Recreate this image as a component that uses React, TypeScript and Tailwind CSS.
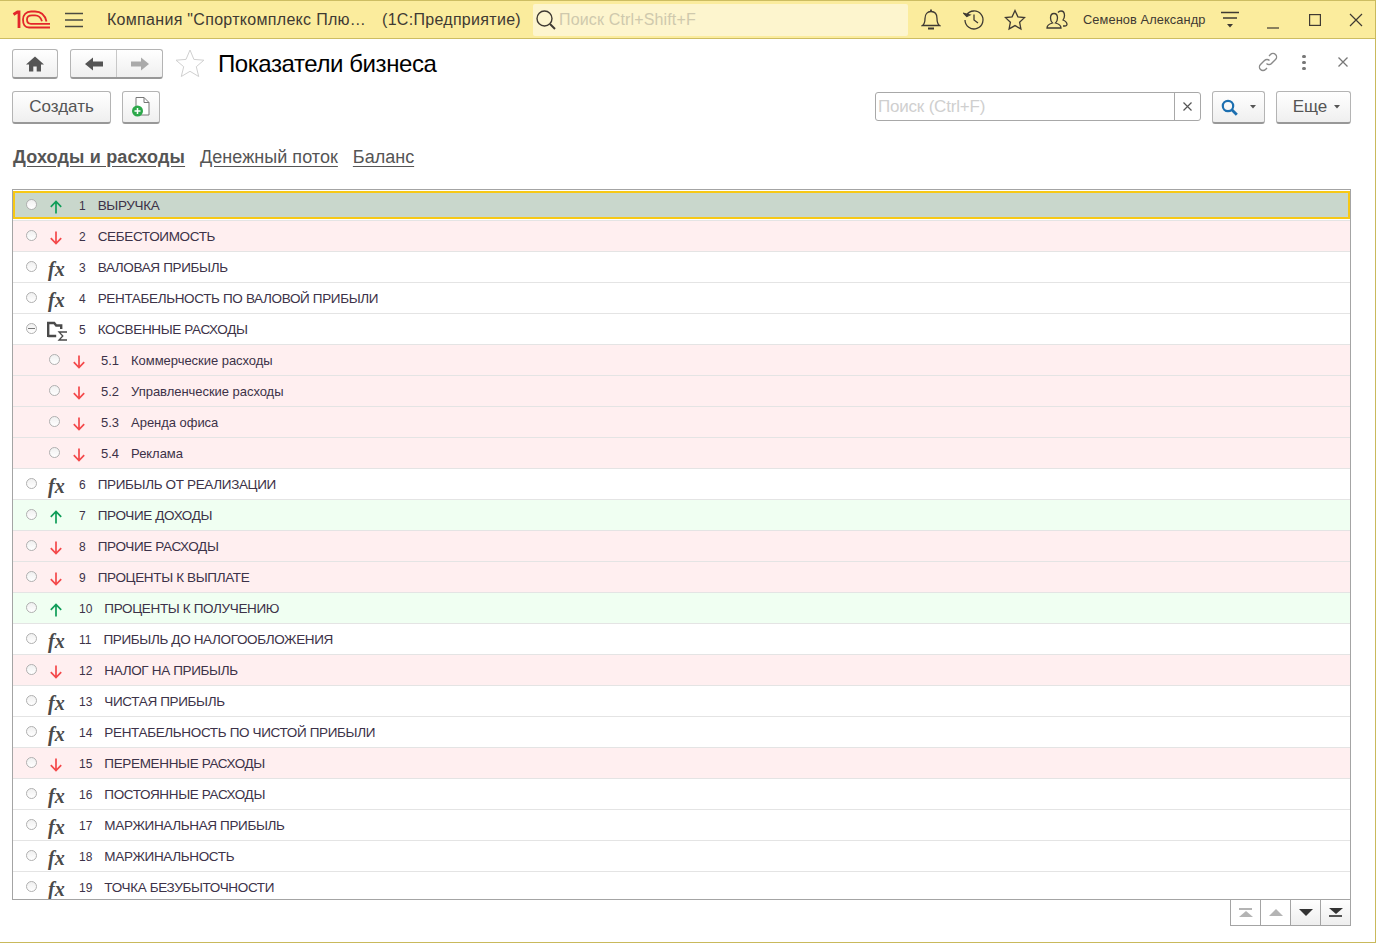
import React from "react";

const btn = "border border-[#b4b4b4] border-b-[#989898] border-b-2 rounded-[3px] bg-gradient-to-b from-white to-[#efefef] flex items-center justify-center";

type Kind = "up" | "down" | "fx" | "group";
type Row = { n: string; t: string; k: Kind; sub?: boolean; sel?: boolean };
const rows: Row[] = [
  { n: "1", t: "ВЫРУЧКА", k: "up", sel: true },
  { n: "2", t: "СЕБЕСТОИМОСТЬ", k: "down" },
  { n: "3", t: "ВАЛОВАЯ ПРИБЫЛЬ", k: "fx" },
  { n: "4", t: "РЕНТАБЕЛЬНОСТЬ ПО ВАЛОВОЙ ПРИБЫЛИ", k: "fx" },
  { n: "5", t: "КОСВЕННЫЕ РАСХОДЫ", k: "group" },
  { n: "5.1", t: "Коммерческие расходы", k: "down", sub: true },
  { n: "5.2", t: "Управленческие расходы", k: "down", sub: true },
  { n: "5.3", t: "Аренда офиса", k: "down", sub: true },
  { n: "5.4", t: "Реклама", k: "down", sub: true },
  { n: "6", t: "ПРИБЫЛЬ ОТ РЕАЛИЗАЦИИ", k: "fx" },
  { n: "7", t: "ПРОЧИЕ ДОХОДЫ", k: "up" },
  { n: "8", t: "ПРОЧИЕ РАСХОДЫ", k: "down" },
  { n: "9", t: "ПРОЦЕНТЫ К ВЫПЛАТЕ", k: "down" },
  { n: "10", t: "ПРОЦЕНТЫ К ПОЛУЧЕНИЮ", k: "up" },
  { n: "11", t: "ПРИБЫЛЬ ДО НАЛОГООБЛОЖЕНИЯ", k: "fx" },
  { n: "12", t: "НАЛОГ НА ПРИБЫЛЬ", k: "down" },
  { n: "13", t: "ЧИСТАЯ ПРИБЫЛЬ", k: "fx" },
  { n: "14", t: "РЕНТАБЕЛЬНОСТЬ ПО ЧИСТОЙ ПРИБЫЛИ", k: "fx" },
  { n: "15", t: "ПЕРЕМЕННЫЕ РАСХОДЫ", k: "down" },
  { n: "16", t: "ПОСТОЯННЫЕ РАСХОДЫ", k: "fx" },
  { n: "17", t: "МАРЖИНАЛЬНАЯ ПРИБЫЛЬ", k: "fx" },
  { n: "18", t: "МАРЖИНАЛЬНОСТЬ", k: "fx" },
  { n: "19", t: "ТОЧКА БЕЗУБЫТОЧНОСТИ", k: "fx" },
];

function Arrow({ up }: { up: boolean }) {
  const c = up ? "#0f9d58" : "#f4484a";
  return (
    <svg width="14" height="14" viewBox="0 0 14 14" fill="none" stroke={c} strokeWidth="1.7">
      {up ? <path d="M7 13.5V1.5M1.8 6.8L7 1.5l5.2 5.3" /> : <path d="M7 .5v12M1.8 7.2L7 12.5l5.2-5.3" />}
    </svg>
  );
}

function KindIcon({ k }: { k: Kind }) {
  if (k === "up" || k === "down") return <span className="mt-[3px] flex"><Arrow up={k === "up"} /></span>;
  if (k === "fx")
    return (
      <span className="mt-[4px] -ml-[1px] font-['Liberation_Serif',serif] italic font-bold text-[20px] leading-none text-[#4a4a4a] tracking-[0px]">
        fx
      </span>
    );
  return (
    <svg width="21" height="20" viewBox="0 0 21 20" fill="none" className="mt-[3px] -ml-[2px]">
      <path d="M1.200 16V2h6l2 2.500h5v3.500M1.200 15h8" stroke="#4a4a4a" strokeWidth="2.400" />
      <path d="M20 11h-8l3.800 4-3.800 4h8" stroke="#4a4a4a" strokeWidth="1.300" />
    </svg>
  );
}

function RowContent({ r }: { r: Row }) {
  return (
    <div className={`flex items-center ${r.sub ? "ml-[23px]" : ""}`}>
      <span className="relative w-[11px] h-[11px] rounded-full border border-[#b0b0b0] bg-gradient-to-b from-[#f0f0f0] to-white -mt-[2px] flex items-center justify-center">
        {r.k === "group" && <span className="w-[7px] h-px bg-[#777]" />}
      </span>
      <span className={`ml-[12px] flex justify-start ${r.sub ? "w-[29px]" : "w-[30px]"}`}>
        <KindIcon k={r.k} />
      </span>
      <span className={`pt-[2px] mr-[12px] tracking-normal ${r.sub ? "text-[13px]" : "text-[12px]"}`}>{r.n}</span>
      <span className="pt-[2px] whitespace-nowrap">{r.t}</span>
    </div>
  );
}

function TableRow({ r }: { r: Row }) {
  const text = r.sub ? "text-[13px] tracking-[-0.04px]" : "text-[13.500px] tracking-[-0.35px]";
  if (r.sel)
    return (
      <div className={`h-[31px] shrink-0 bg-white border-b border-[#e4e4e4] py-px text-[#3c3248] ${text}`}>
        <div className="h-full flex items-center bg-[#c9d7cc] border-2 border-[#f7c815] pl-[11px]">
          <RowContent r={r} />
        </div>
      </div>
    );
  const bg = r.k === "down" ? "bg-[#ffeff0]" : r.k === "up" ? "bg-[#f0fff2]" : "bg-white";
  return (
    <div className={`h-[31px] shrink-0 flex items-center ${bg} border-b border-[#e4e4e4] pl-[13px] text-[#3c3248] ${text}`}>
      <RowContent r={r} />
    </div>
  );
}

const NavBtn = ({ children, cls }: { children: React.ReactNode; cls: string }) => (
  <div className={`${cls} flex items-center justify-center`}>{children}</div>
);

export default function App() {
  return (
    <div className="w-[1376px] h-[943px] overflow-hidden flex flex-col bg-white font-['Liberation_Sans',Arial,sans-serif] border-r border-b border-[#c9b95c]">
      {/* title bar */}
      <div className="h-[39px] shrink-0 bg-[#fbec9d] border-y border-[#cdbd62] flex items-center text-[#3f3a33]">
        <svg width="38" height="20" viewBox="0 0 38 20" fill="none" stroke="#e3262b" className="ml-[12px]">
          <path d="M1.500 4.500L5.500 2h1.500v16" strokeWidth="2.800" />
          <path d="M38 17.500H17c-4 0-6-3.500-6-8S14 1.500 19 1.500h4c6 0 10 4 11.500 10" strokeWidth="1.800" />
          <path d="M38 13.800H19c-3 0-4-2-4-4.300s1.500-4.200 5-4.200h3c3.500 0 6 2.500 7 6" strokeWidth="1.800" />
        </svg>
        <svg width="18" height="16" viewBox="0 0 18 16" stroke="#4a4a42" strokeWidth="1.400" className="ml-[15px]">
          <path d="M0 1.500h18M0 8h18M0 14.500h18" />
        </svg>
        <span className="ml-[24px] text-[16px] tracking-[0.3px] whitespace-nowrap w-[255px]">Компания "Спорткомплекс Плю…</span>
        <span className="ml-[20px] text-[16px] tracking-[0.3px] whitespace-nowrap w-[140px]">(1С:Предприятие)</span>
        <div className="ml-[11px] w-[375px] h-[32px] bg-[#fdf5ce] rounded-[2px] flex items-center pl-[2px]">
          <svg width="22" height="22" viewBox="0 0 22 22" fill="none" stroke="#3f3a33" strokeWidth="1.400">
            <circle cx="9.500" cy="9.500" r="7.500" />
            <path d="M15 15l5 5" strokeWidth="2" />
          </svg>
          <span className="text-[16px] tracking-[0.15px] text-[#cfc9ad] ml-[2px]">Поиск Ctrl+Shift+F</span>
        </div>
        <svg width="20" height="22" viewBox="0 0 20 22" fill="none" stroke="#3f3a33" strokeWidth="1.300" className="ml-[13px]">
          <path d="M1.500 16.500c2-1.500 2.500-3 2.500-7C4 5 6.500 2.500 10 2.500s6 2.500 6 7c0 4 .5 5.500 2.500 7z" />
          <path d="M10 .5v2M7 19.500h6" strokeWidth="1.800" />
        </svg>
        <svg width="22" height="22" viewBox="0 0 22 22" fill="none" stroke="#3f3a33" strokeWidth="1.300" className="ml-[22px]">
          <path d="M3.500 6A9 9 0 1 1 2 11" />
          <path d="M1 4.500l2.800 3 3-1.500z" fill="#3f3a33" />
          <path d="M11 5.500V11l4 3" />
        </svg>
        <svg width="22" height="22" viewBox="0 0 22 22" fill="none" stroke="#3f3a33" strokeWidth="1.300" className="ml-[19px]">
          <path d="M11 1.500l2.900 6.300 6.600.8-4.900 4.600 1.300 6.700-5.900-3.300-5.900 3.300 1.300-6.700L1.500 8.600l6.600-.8z" />
        </svg>
        <svg width="22" height="20" viewBox="0 0 22 20" fill="none" stroke="#3f3a33" strokeWidth="1.300" className="ml-[20px]">
          <path d="M1 18c0-3 2-4 5.500-5-1.500-1.500-2-3-2-5 0-3 1.500-4.500 3.500-4.500s3.500 1.500 3.500 4.500c0 2-.5 3.500-2 5 3.500 1 5.500 2 5.500 5z" />
          <path d="M12 2.500c.8-1 1.700-1.500 3-1.500 2.500 0 3.500 2 3.500 4.500 0 2-.5 3-1.500 4.500 2.500 1 4 2 4 4.500 0 1-1 1.500-2 1.500h-2" />
        </svg>
        <span className="ml-[15px] text-[12.800px] tracking-[0.1px] whitespace-nowrap w-[124px]">Семенов Александр</span>
        <svg width="18" height="18" viewBox="0 0 18 18" stroke="#3f3a33" strokeWidth="1.300" className="ml-[14px]">
          <path d="M0 1.500h18M2 7h14" />
          <path d="M6 13h6l-3 3.500z" fill="#3f3a33" stroke="none" />
        </svg>
        <svg width="12" height="12" viewBox="0 0 12 12" stroke="#3f3a33" strokeWidth="1.200" className="ml-[28px] mt-[6px]">
          <path d="M0 11h12" />
        </svg>
        <svg width="12" height="12" viewBox="0 0 12 12" fill="none" stroke="#3f3a33" strokeWidth="1.200" className="ml-[30px]">
          <rect x=".6" y=".6" width="10.800" height="10.800" />
        </svg>
        <svg width="14" height="14" viewBox="0 0 14 14" stroke="#3f3a33" strokeWidth="1.200" className="ml-[28px]">
          <path d="M1 1l12 12M13 1L1 13" />
        </svg>
      </div>

      {/* form header */}
      <div className="h-[31px] mt-[10px] shrink-0 flex items-start pl-[12px] relative">
        <NavBtn cls={`${btn} w-[46px] h-[30px]`}>
          <svg width="18" height="16" viewBox="0 0 18 16" fill="#555">
            <path d="M9 .5L0 8.500h3V15.500h4.300V10.500h3.400V15.500H15V8.500h3z" />
          </svg>
        </NavBtn>
        <div className={`${btn} w-[93px] h-[30px] ml-[12px] !justify-start`}>
          <div className="w-[46px] h-full flex items-center justify-center border-r border-[#c8c8c8]">
            <svg width="18" height="14" viewBox="0 0 18 14" fill="#555"><path d="M0 7l8-6.500V4.500h10v5H8V13.500z" /></svg>
          </div>
          <div className="flex-1 flex items-center justify-center">
            <svg width="18" height="14" viewBox="0 0 18 14" fill="#aaa"><path d="M18 7l-8-6.500V4.500H0v5h10V13.500z" /></svg>
          </div>
        </div>
        <svg width="30" height="29" viewBox="0 0 30 29" fill="none" stroke="#d0d0d0" strokeWidth="1" className="ml-[12px]">
          <path d="M15 1l3.900 9.400 10 .8-7.600 6.500 2.400 9.800L15 22.300 6.300 27.500l2.400-9.800L1 11.200l10-.8z" />
        </svg>
        <span className="ml-[13px] text-[24px] leading-[29px] text-black tracking-[-0.42px] whitespace-nowrap">Показатели бизнеса</span>
        <div className="ml-auto flex items-center h-[26px] pr-[27px]">
          <svg width="20" height="20" viewBox="0 0 20 20" fill="none" stroke="#8a8a8a" strokeWidth="1.400">
            <path d="M8.500 11.500a3.500 3.500 0 0 0 5 0l4-4a3.500 3.500 0 0 0-5-5l-1.500 1.500M11.500 8.500a3.500 3.500 0 0 0-5 0l-4 4a3.500 3.500 0 0 0 5 5l1.500-1.500" />
          </svg>
          <span className="ml-[24px] flex flex-col gap-[3px]">
            <span className="w-[4px] h-[3px] rounded-full bg-[#777]" />
            <span className="w-[4px] h-[3px] rounded-full bg-[#777]" />
            <span className="w-[4px] h-[3px] rounded-full bg-[#777]" />
          </span>
          <svg width="10" height="10" viewBox="0 0 10 10" stroke="#777" strokeWidth="1.300" className="ml-[32px]">
            <path d="M.5.5l9 9M9.500.5l-9 9" />
          </svg>
        </div>
      </div>

      {/* command bar */}
      <div className="h-[33px] mt-[11px] shrink-0 flex items-start pl-[12px] pr-[24px]">
        <div className={`${btn} w-[99px] h-[33px] text-[17px] text-[#555]`}>Создать</div>
        <div className={`${btn} w-[38px] h-[33px] ml-[11px]`}>
          <svg width="20" height="22" viewBox="0 0 20 22" fill="none">
            <path d="M5 1.500h8l5 5V19H5z" fill="#fff" stroke="#777" />
            <path d="M13 1.500v5h5" stroke="#777" />
            <circle cx="6.500" cy="15" r="5.500" fill="#2ca84a" />
            <path d="M3.500 15h6M6.500 12v6" stroke="#fff" strokeWidth="1.500" />
          </svg>
        </div>
        <div className="ml-auto flex items-start">
          <div className="w-[326px] h-[29px] mt-px border border-[#a8a8a8] rounded-[3px] flex items-center bg-white">
            <span className="flex-1 pl-[2px] text-[17px] tracking-[-0.2px] text-[#cfcfcf]">Поиск (Ctrl+F)</span>
            <span className="w-[26px] h-full border-l border-[#a8a8a8] flex items-center justify-center">
              <svg width="9" height="9" viewBox="0 0 9 9" stroke="#555" strokeWidth="1.200"><path d="M.5.5l8 8M8.500.5l-8 8" /></svg>
            </span>
          </div>
          <div className={`${btn} w-[53px] h-[33px] ml-[11px] gap-[12px]`}>
            <svg width="17" height="17" viewBox="0 0 17 17" fill="none" stroke="#1c6fb0">
              <circle cx="7" cy="7" r="5.200" strokeWidth="2.200" />
              <path d="M10.800 10.800l5 5" strokeWidth="2.800" />
            </svg>
            <svg width="6" height="4" viewBox="0 0 6 4" fill="#555"><path d="M0 0h6L3 3.500z" /></svg>
          </div>
          <div className={`${btn} w-[75px] h-[33px] ml-[11px] gap-[7px] pl-[6px]`}>
            <span className="text-[17px] text-[#555]">Еще</span>
            <svg width="6" height="4" viewBox="0 0 6 4" fill="#555"><path d="M0 0h6L3 3.500z" /></svg>
          </div>
        </div>
      </div>

      {/* tabs */}
      <div className="h-[22px] mt-[22px] shrink-0 flex items-center pl-[13px] text-[18px] text-[#555] underline underline-offset-[3px]">
        <span className="font-bold tracking-[0.15px]">Доходы и расходы</span>
        <span className="ml-[15px] tracking-[0.04px]">Денежный поток</span>
        <span className="ml-[15px]">Баланс</span>
      </div>

      {/* table */}
      <div className="mt-[21px] ml-[12px] w-[1339px] h-[711px] shrink-0 border border-[#a4a4a4] flex flex-col overflow-hidden">
        {rows.map((r) => (
          <TableRow key={r.n} r={r} />
        ))}
      </div>

      {/* pager */}
      <div className="self-start ml-[1230px] w-[121px] h-[27px] -mt-px flex border border-[#a4a4a4] bg-white">
        <div className="flex-1 border-r border-[#a4a4a4] flex flex-col items-center justify-center">
          <span className="w-[13px] h-[2px] bg-[#b4b4b4] mb-px" />
          <svg width="14" height="6" viewBox="0 0 14 6" fill="#b4b4b4"><path d="M7 0l7 6H0z" /></svg>
        </div>
        <div className="flex-1 border-r border-[#a4a4a4] flex items-center justify-center">
          <svg width="14" height="7" viewBox="0 0 14 7" fill="#b4b4b4"><path d="M7 0l7 7H0z" /></svg>
        </div>
        <div className="flex-1 border-r border-[#a4a4a4] flex items-center justify-center bg-gradient-to-b from-white to-[#eee]">
          <svg width="14" height="7" viewBox="0 0 14 7" fill="#333"><path d="M0 0h14L7 7z" /></svg>
        </div>
        <div className="flex-1 flex flex-col items-center justify-center bg-gradient-to-b from-white to-[#eee]">
          <svg width="14" height="6" viewBox="0 0 14 6" fill="#333"><path d="M0 0h14L7 6z" /></svg>
          <span className="w-[13px] h-[2px] bg-[#555] mt-px" />
        </div>
      </div>
    </div>
  );
}
